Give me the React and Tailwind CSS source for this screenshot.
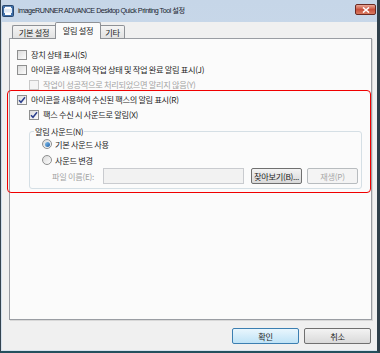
import React from 'react'

const font = { fontFamily: '"Noto Sans CJK KR", "Noto Sans", sans-serif' }

const Check = ({ checked, disabled }) => (
  <span
    className={`w-[10px] h-[10px] shrink-0 border flex items-center justify-center ${
      disabled ? 'border-[#c8c8c8] bg-[#f4f4f4]' : 'border-[#8e8f8f] bg-gradient-to-br from-[#dcdcdc] to-[#fdfdfd]'
    }`}
  >
    {checked && (
      <svg width="8" height="8" viewBox="0 0 8 8">
        <path d="M1 4.2 L3 6.3 L7 1.3" fill="none" stroke="#2b3f8c" strokeWidth="1.5" />
      </svg>
    )}
  </span>
)

const Radio = ({ checked }) => (
  <span className="w-[10px] h-[10px] shrink-0 rounded-full border border-[#8e8f8f] bg-gradient-to-br from-[#dadada] to-[#fdfdfd] flex items-center justify-center">
    {checked && <span className="w-[5px] h-[5px] rounded-full bg-gradient-to-br from-[#86c3ee] to-[#1c5fa8]" />}
  </span>
)

const Row = ({ indent, checked, disabled, children }) => (
  <div className={`h-[15px] flex items-center gap-[4px] ${indent}`}>
    <Check checked={checked} disabled={disabled} />
    <span className={disabled ? 'text-[#a3a3a3]' : 'text-[#1e1e1e]'}>{children}</span>
  </div>
)

export default function App() {
  return (
    <div
      className="relative w-[380px] h-[353px] flex flex-col bg-gradient-to-b from-[#c6d6e8] to-[#d6e2ee] border-l border-[#34434f] border-r-[3px] border-r-[#2f3f4a] border-b-[2px] border-b-[#24505e] text-[8.2px] tracking-[-0.3px] leading-none whitespace-nowrap"
      style={font}
    >
      {/* Title bar */}
      <div className="h-[22px] flex items-center pl-[1px] pr-[1px] shrink-0">
        <svg width="12" height="12" viewBox="0 0 12 12" className="shrink-0">
          <rect x="0.5" y="0.5" width="11" height="11" rx="1" fill="#3f6fa8" stroke="#28476e" />
          <rect x="2" y="3" width="8" height="5" fill="#dfe9f5" />
          <rect x="3" y="1.8" width="6" height="2" fill="#ffffff" />
          <rect x="3" y="7.5" width="6" height="2.5" fill="#ffffff" />
        </svg>
        <span
          className="ml-[4px] text-[7.2px] tracking-[-0.5px] text-[#1b2530]"
          style={{ fontFamily: '"Liberation Sans", "Noto Sans CJK KR", sans-serif' }}
        >
          imageRUNNER ADVANCE Desktop Quick Printing Tool 설정
        </span>
        <div className="ml-auto w-[21px] h-[11px] mb-[3px] rounded-[2px] border border-[#6b2a22] bg-gradient-to-b from-[#e8a898] via-[#c8503c] to-[#d87a60] flex items-center justify-center">
          <svg width="8" height="6" viewBox="0 0 8 6">
            <path d="M1 0.5 L7 5.5 M7 0.5 L1 5.5" stroke="#ffffff" strokeWidth="1.6" />
          </svg>
        </div>
      </div>

      {/* Client */}
      <div className="flex-1 ml-[1px] mb-[1px] bg-[#f0f0f0] flex flex-col pl-[7px] pr-[5px]">
        {/* Tabs */}
        <div className="h-[17px] flex items-end pl-[3px] shrink-0 relative z-10 -mb-px">
          <div className="h-[14px] w-[43px] border border-[#8e9196] border-r-0 rounded-tl-[2px] bg-gradient-to-b from-[#f4f4f4] to-[#e2e2e2] flex items-center justify-center text-[#1e1e1e]">
            기본 설정
          </div>
          <div className="h-[17px] w-[46px] border border-[#8e9196] border-b-0 rounded-t-[2px] bg-[#fbfbfb] flex items-center justify-center pb-[2px] text-[#1e1e1e]">
            알림 설정
          </div>
          <div className="h-[14px] w-[24px] border border-[#8e9196] border-l-0 rounded-tr-[2px] bg-gradient-to-b from-[#f4f4f4] to-[#e2e2e2] flex items-center justify-center text-[#1e1e1e]">
            기타
          </div>
        </div>

        {/* Panel */}
        <div className="flex-1 border border-[#9a9da3] bg-[#fbfbfb] shadow-[1px_1px_0_#d8d8d8] flex flex-col pt-[8px] pl-[7px]">
          <Row>장치 상태 표시(S)</Row>
          <Row>아이콘을 사용하여 작업 상태 및 작업 완료 알림 표시(J)</Row>
          <Row indent="pl-[12px]" disabled>작업이 성공적으로 처리되었으면 알리지 않음(Y)</Row>
          <Row checked>아이콘을 사용하여 수신된 팩스의 알림 표시(R)</Row>
          <Row indent="pl-[12px]" checked>팩스 수신 시 사운드로 알림(X)</Row>

          {/* Group box */}
          <div className="relative mt-[9px] ml-[12px] w-[333px] h-[58px] border border-[#d5dfe5] rounded-[3px] flex flex-col pt-[4px] pl-[12px]">
            <span className="absolute -top-[5px] left-[4px] px-[1px] bg-[#fbfbfb] text-[#1e1e1e]">알림 사운드(N)</span>
            <div className="h-[16px] flex items-center gap-[3px]">
              <Radio checked />
              <span className="text-[#1e1e1e]">기본 사운드 사용</span>
            </div>
            <div className="h-[16px] flex items-center gap-[3px]">
              <Radio />
              <span className="text-[#1e1e1e]">사운드 변경</span>
            </div>
            <div className="h-[16px] flex items-center pl-[10px]">
              <span className="w-[51px] text-[#a3a3a3]">파일 이름(E):</span>
              <div className="w-[141px] h-[16px] border border-[#c9cbcf] bg-[#f2f2f2]" />
              <div className="ml-[7px] w-[51px] h-[16px] border border-[#707070] rounded-[2px] bg-gradient-to-b from-[#f3f3f3] to-[#d9d9d9] flex items-center justify-center text-[#1e1e1e]">
                찾아보기(B)...
              </div>
              <div className="ml-[5px] w-[51px] h-[16px] border border-[#b8bcbf] rounded-[2px] bg-[#f4f4f4] flex items-center justify-center text-[#a8a8a8]">
                재생(P)
              </div>
            </div>
          </div>
        </div>

        {/* Buttons */}
        <div className="h-[30px] shrink-0 flex items-start justify-end pt-[8px] gap-[5px] pr-[1px]">
          <div className="w-[67px] h-[16px] border border-[#3c7fb1] rounded-[2px] bg-gradient-to-b from-[#e9f6fd] to-[#bfe3f6] flex items-center justify-center text-[#1e1e1e]">
            확인
          </div>
          <div className="w-[67px] h-[16px] border border-[#707070] rounded-[2px] bg-gradient-to-b from-[#f3f3f3] to-[#dadada] flex items-center justify-center text-[#1e1e1e]">
            취소
          </div>
        </div>
      </div>

      {/* Annotation highlight */}
      <div className="absolute left-[6px] top-[90px] w-[364px] h-[103px] border-[1.5px] border-[#f00000] rounded-[4px] pointer-events-none" />
    </div>
  )
}
